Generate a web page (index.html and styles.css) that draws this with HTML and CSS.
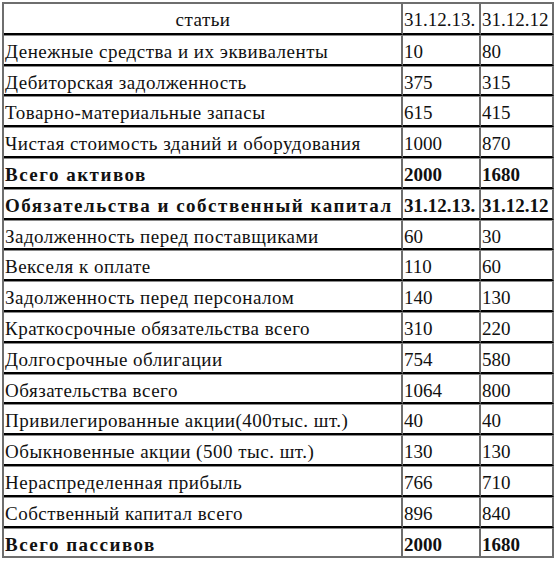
FILE: index.html
```html
<!DOCTYPE html>
<html lang="ru">
<head>
<meta charset="utf-8">
<link rel="stylesheet" href="styles.css">
</head>
<body>
<table class="bal">
<colgroup><col class="c1"><col class="c2"><col class="c3"></colgroup>
<tr class="head"><td class="center">статьи</td><td>31.12.13.</td><td>31.12.12</td></tr>
<tr><td>Денежные средства и их эквиваленты</td><td>10</td><td>80</td></tr>
<tr><td>Дебиторская задолженность</td><td>375</td><td>315</td></tr>
<tr><td>Товарно-материальные запасы</td><td>615</td><td>415</td></tr>
<tr><td>Чистая стоимость зданий и оборудования</td><td>1000</td><td>870</td></tr>
<tr class="bold"><td>Всего активов</td><td>2000</td><td>1680</td></tr>
<tr class="bold"><td>Обязательства и собственный капитал</td><td>31.12.13.</td><td>31.12.12</td></tr>
<tr><td>Задолженность перед поставщиками</td><td>60</td><td>30</td></tr>
<tr><td>Векселя к оплате</td><td>110</td><td>60</td></tr>
<tr><td>Задолженность перед персоналом</td><td>140</td><td>130</td></tr>
<tr><td>Краткосрочные обязательства всего</td><td>310</td><td>220</td></tr>
<tr><td>Долгосрочные облигации</td><td>754</td><td>580</td></tr>
<tr><td>Обязательства всего</td><td>1064</td><td>800</td></tr>
<tr><td>Привилегированные акции(400тыс. шт.)</td><td>40</td><td>40</td></tr>
<tr><td>Обыкновенные акции (500 тыс. шт.)</td><td>130</td><td>130</td></tr>
<tr><td>Нераспределенная прибыль</td><td>766</td><td>710</td></tr>
<tr><td>Собственный капитал всего</td><td>896</td><td>840</td></tr>
<tr class="bold last"><td>Всего пассивов</td><td>2000</td><td>1680</td></tr>
</table>
</body>
</html>
```
FILE: styles.css
```css
html, body {
  margin: 0;
  padding: 0;
  background: #fff;
}
body {
  padding: 2px;
}
.bal {
  border-collapse: separate;
  border-spacing: 0;
  table-layout: fixed;
  width: 552px;
  border-top: 2px solid #6e6e6e;
  border-left: 2px solid #6e6e6e;
  font-family: "Liberation Serif", "DejaVu Serif", serif;
  font-size: 19px;
  color: #111;
}
.c1 { width: 399px; }
.c2 { width: 78px; }
.c3 { width: 73px; }
.bal td {
  box-sizing: border-box;
  height: 30.8px;
  padding: 5px 0 0 1px;
  border-right: 2px solid #6e6e6e;
  border-bottom: 2px solid #000;
  border-top: 1px solid #8a8a8a;
  white-space: nowrap;
  overflow: hidden;
  vertical-align: top;
  line-height: 22px;
  letter-spacing: 0.5px;
}
.bal td + td {
  letter-spacing: 0;
}
.bal tr.head td {
  border-top: 0;
}
.bal .center {
  text-align: center;
}
.bal tr.bold td {
  font-weight: bold;
  letter-spacing: 1.5px;
}
.bal tr.bold td + td {
  letter-spacing: 0;
}
.bal tr.last td {
  border-bottom: 2px solid #6e6e6e;
}
```
